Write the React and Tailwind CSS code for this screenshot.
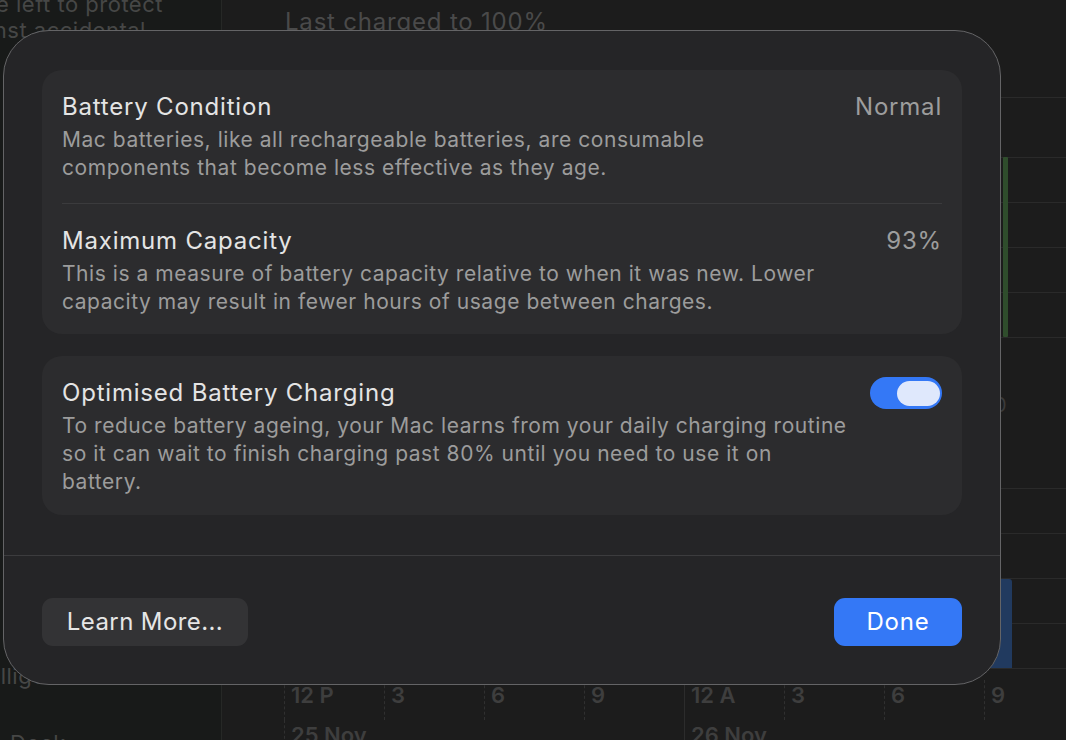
import React from "react";

const font = { fontFamily: "Inter, 'Noto Sans', 'Liberation Sans', sans-serif" };

function Toggle() {
  return (
    <div className="w-[72px] h-[32px] rounded-full bg-[#3478f6] flex items-center justify-end pr-[2px] shrink-0">
      <div className="w-[43px] h-[25px] rounded-full bg-[#dfe8fc]" />
    </div>
  );
}

function Background() {
  const hours = ["12 P", "3", "6", "9", "12 A", "3", "6", "9"];
  const lines = [97, 157, 202, 247, 292, 337, 488, 533, 578, 623, 668];
  return (
    <div className="flex w-[1066px] h-[740px] overflow-hidden bg-[#1c1c1c]">
      <div className="w-[222px] shrink-0 bg-[#181a19] border-r border-[#262826] flex flex-col text-[22px] tracking-[0.5px] text-[#464746]">
        <div className="-ml-[4px] leading-[26px] -mt-[9px] whitespace-nowrap">e left to protect</div>
        <div className="-ml-[12px] leading-[26px] whitespace-nowrap">inst accidental</div>
        <div className="mt-auto -ml-[40px] leading-[26px] mb-[41px] whitespace-nowrap">Intelligent</div>
        <div className="pl-[10px] leading-[26px] -mb-[16px]">Dock</div>
      </div>
      <div className="flex-1 flex flex-col">
        <div className="h-[40px] shrink-0 pl-[63px] pt-[8px] text-[24px] tracking-[0.8px] leading-[28px] text-[#4a4a4a] whitespace-nowrap">
          Last charged to 100%
        </div>
        <svg width="844" height="640" className="block shrink-0">
          {lines.map((y) => (
            <line key={y} x1="62" x2="844" y1={y - 40 + 0.5} y2={y - 40 + 0.5} stroke="#2a2a2a" strokeWidth="1" />
          ))}
          <rect x="781" y={157 - 40} width="5" height="180" rx="1" fill="#2f4d2c" />
          <path d={`M768 ${668 - 40} V ${582 - 40} Q 768 ${579 - 40} 771 ${579 - 40} H 787 Q 790 ${579 - 40} 790 ${582 - 40} V ${668 - 40} Z`} fill="#213a5f" />
          <text x="772" y={405 - 40 + 7} fontSize="20" fill="#3a3a3a" style={font}>0</text>
        </svg>
        <div className="flex shrink-0 pl-[62px] h-[40px] text-[22px] font-semibold text-[#3e3e3e]">
          {hours.map((h, i) => (
            <div
              key={i}
              className={
                "w-[100px] shrink-0 pl-[6px] pt-[1px] leading-[28px] border-l " +
                (i === 4 ? "border-solid border-[#2c2c2c]" : "border-dashed border-[#303030]")
              }
            >
              {h}
            </div>
          ))}
        </div>
        <div className="flex shrink-0 pl-[62px] h-[40px] text-[22px] font-semibold text-[#3e3e3e]">
          <div className="w-[400px] shrink-0 pl-[6px] pt-[1px] leading-[28px] border-l border-dashed border-[#303030]">25 Nov</div>
          <div className="w-[400px] shrink-0 pl-[6px] pt-[1px] leading-[28px] border-l border-solid border-[#2c2c2c]">26 Nov</div>
        </div>
      </div>
    </div>
  );
}

function Row({ title, value, lines, right, pt, pb }) {
  return (
    <div className={"flex items-start justify-between " + pt + " " + pb}>
      <div>
        <div className="text-[24px] tracking-[0.8px] leading-[30px] text-[#e4e4e4] mb-[4px] whitespace-nowrap">{title}</div>
        <div className="text-[21px] tracking-[0.55px] leading-[28px] text-[#9c9c9c] whitespace-nowrap">
          {lines.map((l, i) => (
            <div key={i}>{l}</div>
          ))}
        </div>
      </div>
      {value ? (
        <div className="text-[24px] tracking-[0.8px] leading-[30px] text-[#9d9d9d]">{value}</div>
      ) : (
        right
      )}
    </div>
  );
}

export default function App() {
  return (
    <div className="relative w-[1066px] h-[740px] overflow-hidden" style={font}>
      <Background />
      <div className="absolute left-[3px] top-[30px] w-[998px] h-[655px] rounded-[46px] bg-[#252527] border border-[#646466] flex flex-col">
        <div className="px-[38px] pt-[39px]">
          <div className="rounded-[20px] bg-[#2c2c2e] px-[20px]">
            <Row
              title="Battery Condition"
              value="Normal"
              pt="pt-[22px]"
              pb="pb-[21px]"
              lines={[
                "Mac batteries, like all rechargeable batteries, are consumable",
                "components that become less effective as they age.",
              ]}
            />
            <div className="h-px bg-[#3b3b3d]" />
            <Row
              title="Maximum Capacity"
              value="93%"
              pt="pt-[22px]"
              pb="pb-[18px]"
              lines={[
                "This is a measure of battery capacity relative to when it was new. Lower",
                "capacity may result in fewer hours of usage between charges.",
              ]}
            />
          </div>
          <div className="mt-[22px] rounded-[20px] bg-[#2c2c2e] px-[20px]">
            <Row
              title="Optimised Battery Charging"
              pt="pt-[22px]"
              pb="pb-[19px]"
              right={<div className="-mt-[1px]"><Toggle /></div>}
              lines={[
                "To reduce battery ageing, your Mac learns from your daily charging routine",
                "so it can wait to finish charging past 80% until you need to use it on",
                "battery.",
              ]}
            />
          </div>
        </div>
        <div className="mt-[40px] h-px bg-[#3c3c3e]" />
        <div className="flex justify-between px-[38px] pt-[42px]">
          <button className="h-[48px] w-[206px] rounded-[11px] bg-[#333335] text-[24px] tracking-[0.4px] text-[#e6e6e6]">
            Learn More...
          </button>
          <button className="h-[48px] w-[128px] rounded-[11px] bg-[#3478f6] text-[24px] tracking-[0.8px] text-white">
            Done
          </button>
        </div>
      </div>
    </div>
  );
}
